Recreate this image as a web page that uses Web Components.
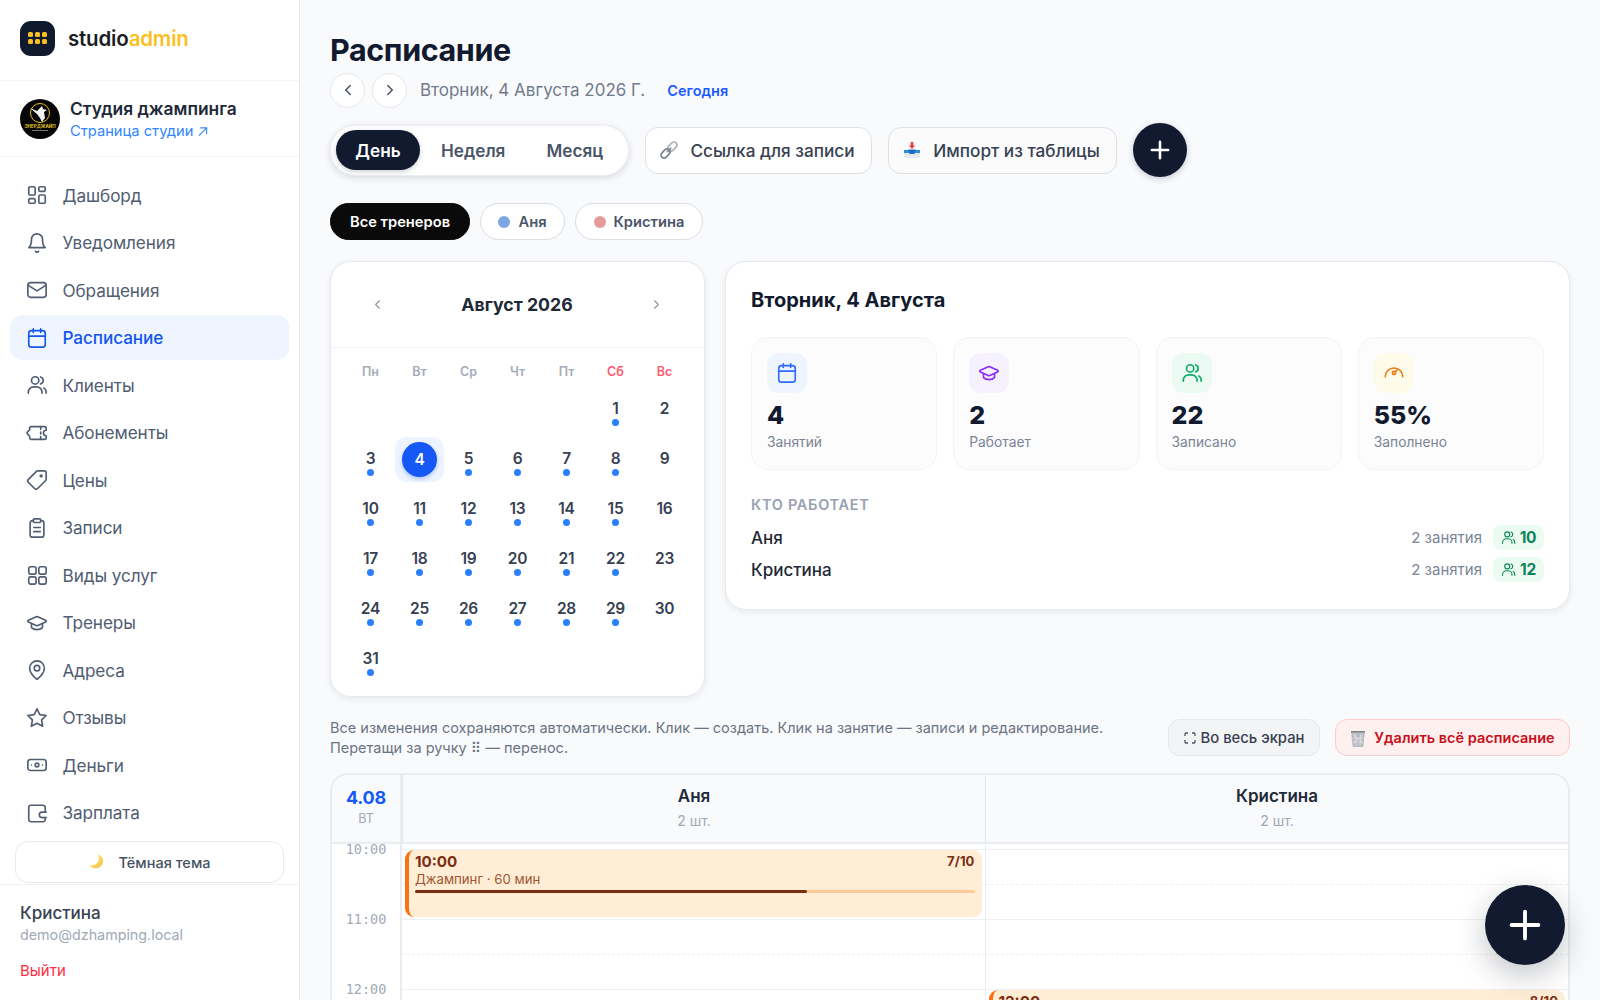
<!DOCTYPE html>
<html lang="ru"><head><meta charset="utf-8"><title>Расписание</title>
<style>
html,body{margin:0;height:100%;overflow:hidden;background:#f9fafc;font-family:Inter,"DejaVu Sans",sans-serif;color:#111827}
</style></head>
<body>
<app-shell></app-shell>
<script>
const FONT='Inter,"DejaVu Sans",sans-serif';
const I={
dash:'<rect x="3" y="3" width="7" height="9" rx="1.5"/><rect x="14" y="3" width="7" height="5" rx="1.5"/><rect x="14" y="12" width="7" height="9" rx="1.5"/><rect x="3" y="16" width="7" height="5" rx="1.5"/>',
bell:'<path d="M6 8a6 6 0 0 1 12 0c0 7 3 9 3 9H3s3-2 3-9"/><path d="M10.3 21a1.94 1.94 0 0 0 3.4 0"/>',
mail:'<rect x="2" y="4" width="20" height="16" rx="3"/><path d="m2.5 7 9.5 6 9.5-6"/>',
cal:'<path d="M8 2v4M16 2v4"/><rect x="3" y="4" width="18" height="18" rx="3"/><path d="M3 10h18"/>',
users:'<circle cx="10" cy="7" r="4"/><path d="M2.5 21v-1a6 6 0 0 1 6-6h3a6 6 0 0 1 6 6v1"/><path d="M16 3.2a4 4 0 0 1 0 7.6"/><path d="M22 21v-1.5a5 5 0 0 0-2.5-4.2"/>',
ticket:'<path d="M5.500 5H20.500A1.500 1.500 0 0 1 22 6.500V9a3 3 0 0 0 0 6v2.500a1.500 1.500 0 0 1-1.500 1.500H5.500A1.500 1.500 0 0 1 4 17.500V15.500L1.800 13.200a1.700 1.700 0 0 1 0-2.400L4 8.500V6.500A1.500 1.500 0 0 1 5.500 5Z"/><path d="M16 5v3M16 11v2M16 16v3"/>',
tag:'<g transform="matrix(-1 0 0 1 24 0)"><path d="M12.586 2.586A2 2 0 0 0 11.172 2H4a2 2 0 0 0-2 2v7.172a2 2 0 0 0 .586 1.414l8.704 8.704a2.426 2.426 0 0 0 3.420 0l6.580-6.580a2.426 2.426 0 0 0 0-3.420z"/><circle cx="7.500" cy="7.500" r="1"/></g>',
clip:'<rect x="8" y="2" width="8" height="4" rx="1"/><path d="M16 4h1a2.500 2.500 0 0 1 2.500 2.500V19.500A2.500 2.500 0 0 1 17 22H7a2.500 2.500 0 0 1-2.500-2.500V6.500A2.500 2.500 0 0 1 7 4h1"/><path d="M8.500 11.500h7M8.500 16h7"/>',
grid:'<rect x="3" y="3" width="8" height="8" rx="2"/><rect x="14" y="3" width="8" height="8" rx="2"/><rect x="3" y="14" width="8" height="8" rx="2"/><rect x="14" y="14" width="8" height="8" rx="2"/>',
cap:'<path d="M21.420 10.922a1 1 0 0 0-.019-1.838L12.830 5.180a2 2 0 0 0-1.660 0L2.600 9.080a1 1 0 0 0 0 1.832l8.570 3.908a2 2 0 0 0 1.660 0z"/><path d="M6 12.500V17c3 3 9 3 12 0v-4.500"/>',
pin:'<path d="M20 10c0 4.993-5.539 10.193-7.399 11.799a1 1 0 0 1-1.202 0C9.539 20.193 4 14.993 4 10a8 8 0 0 1 16 0"/><circle cx="12" cy="10" r="3"/>',
star:'<polygon points="12 2 15.090 8.260 22 9.270 17 14.140 18.180 21.020 12 17.770 5.820 21.020 7 14.140 2 9.270 8.910 8.260"/>',
money:'<rect x="2" y="6" width="20" height="12" rx="3"/><circle cx="12" cy="12" r="2"/><path d="M6 12h.01M18 12h.01"/>',
wallet:'<path d="M21 10V6a2.500 2.500 0 0 0-2.500-2.500H5.500A2.500 2.500 0 0 0 3 6v13a2.500 2.500 0 0 0 2.500 2.500h13a2.500 2.500 0 0 0 2.500-2.500v-2"/><path d="M22 11h-4.500a3 3 0 0 0 0 6H22"/>',
gauge:'<path d="M2.500 16a9.500 9.500 0 0 1 19 0"/><circle cx="12" cy="12" r="1.800"/><path d="m13.500 10.500 1.800-1.800"/>',
left:'<path d="m15 18-6-6 6-6"/>',right:'<path d="m9 18 6-6-6-6"/>',plus:'<path d="M5 12h14M12 5v14"/>'
};
const svg=(n,s=20,w=2,c='currentColor')=>`<svg width="${s}" height="${s}" viewBox="0 0 24 24" fill="none" stroke="${c}" stroke-width="${w}" stroke-linecap="round" stroke-linejoin="round" aria-hidden="true">${I[n]}</svg>`;
const EMOJI={
link:`<svg width="20" height="20" viewBox="0 0 20 20" fill="none"><g stroke-linecap="round"><path d="M8.500 11.500l3-3" stroke="#8b939c" stroke-width="2"/><rect x="10.500" y="1.500" width="6" height="10" rx="3" transform="rotate(45 13.500 6.500)" stroke="#aeb5bc" stroke-width="1.800"/><rect x="3.500" y="8.500" width="6" height="10" rx="3" transform="rotate(45 6.500 13.500)" stroke="#7d858e" stroke-width="1.800"/></g></svg>`,
inbox:`<svg width="20" height="20" viewBox="0 0 20 20"><path d="M2 11h16v6a1 1 0 0 1-1 1H3a1 1 0 0 1-1-1z" fill="#e6e8ea"/><path d="M2 10h4.500l1 3h5l1-3H18v3H2z" fill="#2f8ce0"/><path d="M6 9.500h8L12.500 14h-5z" fill="#1f6fc0"/><path d="M8.700 2h2.600v3.500H13l-3 3.500-3-3.500h1.700z" fill="#ee3a3a"/></svg>`,
moon:`<svg width="18" height="18" viewBox="0 0 18 18"><defs><linearGradient id="m" x1="0" y1="0" x2="1" y2="1"><stop offset="0" stop-color="#fff0a8"/><stop offset="1" stop-color="#f5bf30"/></linearGradient></defs><path d="M10 1.500c3.800 1.200 5.500 4.300 5 7.500-.6 3.800-4 6.500-7.700 6.300-2.700-.2-4.800-1.500-5.800-3.300 3.700 1 7-.4 8.500-3.300 1-2.200 1-4.800 0-7.200z" fill="url(#m)"/></svg>`,
trash:`<svg width="16" height="18" viewBox="0 0 16 18"><path d="M1 2h14l-1.500 15a1 1 0 0 1-1 1h-9a1 1 0 0 1-1-1z" fill="#b9bdc1"/><path d="M1 2h14v1.500H1z" fill="#7d8286"/><path d="M3.500 6l9 8M12.500 6l-9 8M5 4.500l1 12M11 4.500l-1 12M2.500 9h11M3 13h10" stroke="#e4e6e8" stroke-width=".7"/></svg>`
};
const base=`:host{font-family:${FONT};box-sizing:border-box}*{box-sizing:border-box}`;
function def(name,css,render){customElements.define(name,class extends HTMLElement{connectedCallback(){if(this.shadowRoot)return;const r=this.attachShadow({mode:'open'});r.innerHTML=`<style>${base}${css}</style>`+render(this);}});}

def('nav-link',`:host{display:flex;align-items:center;height:45px;padding:0 0 0 16px;gap:14.500px;border-radius:12px;font-size:17.200px;color:#515d72;letter-spacing:-.1px}
:host([active]){background:#eef5ff;color:#1457f0;font-weight:500}svg{flex:none}`,
e=>svg(e.getAttribute('icon'),22,1.800)+`<span><slot></slot></span>`);

def('app-sidebar',`:host{display:flex;flex-direction:column;flex:none;width:300px;height:1000px;background:#fff;border-right:1px solid #e9ebef}
.brand{display:flex;align-items:center;gap:13px;height:81px;padding:0 20px 4px;border-bottom:1px solid #f3f4f6}
.logo{width:35px;height:35px;border-radius:11px;background:#101a2e;display:grid;grid-template-columns:repeat(3,5px);gap:2px;place-content:center}
.logo i{width:5px;height:5px;border-radius:1.500px;background:#fbbf24}
.word{font-size:20.500px;font-weight:600;letter-spacing:-.2px;color:#1a1d23}.word b{font-weight:600;color:#fbbf24}
.studio{display:flex;align-items:center;gap:10px;height:76px;padding:0 20px;border-bottom:1px solid #f3f4f6}
.studio svg{flex:none}
.t{padding-top:3px}.n{font-size:17.400px;font-weight:600;color:#1f2937;line-height:22px}.l{font-size:14.700px;color:#2f86ff;line-height:22px;display:flex;align-items:center;gap:4px}
nav{display:flex;flex-direction:column;gap:2.500px;padding:15.500px 10px 0}
.theme{display:flex;align-items:center;justify-content:center;gap:12px;height:42px;margin:6px 15px 0;border:1px solid #e8eaef;border-radius:13px;font-size:14.500px;font-weight:500;color:#475264}
.foot{border-top:1px solid #eef0f3;margin-top:1px;padding:17px 20px 0}
.fn{font-size:17px;font-weight:500;color:#374151;line-height:22px}.fe{font-size:14.300px;color:#a1a9b6;line-height:20px;margin-top:1px}.out{font-size:15px;color:#ff2d3f;margin-top:16px;line-height:20px}`,
()=>`<div class="brand"><div class="logo">${'<i></i>'.repeat(6)}</div><div class="word">studio<b>admin</b></div></div>
<div class="studio"><svg width="40" height="40" viewBox="0 0 40 40"><circle cx="20" cy="20" r="20" fill="#050505"/><circle cx="20" cy="14" r="9.500" fill="none" stroke="#e5c320" stroke-width="1"/><path d="M10 9l7 3 5-5 1 3 4 1-3 2 1 6-3 4-2-4-3-4z" fill="#f4f4f4"/><text x="20" y="28.500" text-anchor="middle" font-size="4.500" font-weight="700" fill="#e5c320" font-family="Inter">ЭНЕРДЖАЙП</text><rect x="12" y="31" width="16" height="1" fill="#777"/></svg>
<div class="t"><div class="n">Студия джампинга</div><div class="l">Страница студии <svg width="11" height="11" viewBox="0 0 12 12" fill="none" stroke="currentColor" stroke-width="1.200"><path d="M2 10.500 10 2.500M3.500 2h7v7"/></svg></div></div></div>
<nav>
<nav-link icon="dash">Дашборд</nav-link><nav-link icon="bell">Уведомления</nav-link><nav-link icon="mail">Обращения</nav-link><nav-link icon="cal" active>Расписание</nav-link><nav-link icon="users">Клиенты</nav-link><nav-link icon="ticket">Абонементы</nav-link><nav-link icon="tag">Цены</nav-link><nav-link icon="clip">Записи</nav-link><nav-link icon="grid">Виды услуг</nav-link><nav-link icon="cap">Тренеры</nav-link><nav-link icon="pin">Адреса</nav-link><nav-link icon="star">Отзывы</nav-link><nav-link icon="money">Деньги</nav-link><nav-link icon="wallet">Зарплата</nav-link>
</nav>
<div class="theme">${EMOJI.moon}<span>Тёмная тема</span></div>
<div class="foot"><div class="fn">Кристина</div><div class="fe">demo@dzhamping.local</div><div class="out">Выйти</div></div>`);

def('page-head',`:host{display:block}
h1{margin:0;font-size:30.500px;font-weight:700;line-height:40px;color:#111a2e;letter-spacing:-.4px}
.row{display:flex;align-items:center;margin-top:3px;height:34px}
.c{width:35px;height:35px;border:1px solid #e6e8ed;border-radius:50%;background:#fff;display:grid;place-items:center;color:#475264;margin-right:7px;flex:none}
.d{font-size:17px;color:#717b8d;margin:0 22px 0 6px}.t{font-size:14.500px;font-weight:600;color:#1a5cff}`,
()=>`<h1>Расписание</h1><div class="row"><div class="c">${svg('left',18,2)}</div><div class="c">${svg('right',18,2)}</div><div class="d">Вторник, 4 Августа 2026 Г.</div><div class="t">Сегодня</div></div>`);

def('view-tabs',`:host{display:flex;align-items:center;height:51px;width:299px;padding:0 5px;background:#fff;border:1px solid #eceef2;border-radius:26px;box-shadow:0 2px 7px rgba(16,24,40,.14);font-size:17.200px;font-weight:600;color:#4b5568}
span{display:flex;align-items:center;justify-content:center;height:40px}
.a{width:84px;background:#111a2e;color:#fff;border-radius:20px;box-shadow:0 2px 5px rgba(16,24,40,.2);margin-right:21px}.b{margin-right:41px}`,
()=>`<span class="a">День</span><span class="b">Неделя</span><span>Месяц</span>`);

def('tool-button',`:host{display:flex;align-items:center;justify-content:center;height:47px;gap:11px;padding-right:3px;background:#fff;border:1.500px solid #dde0e7;border-radius:13px;font-size:17.200px;font-weight:500;color:#374151}svg{flex:none}`,
e=>EMOJI[e.getAttribute('emoji')]+`<span><slot></slot></span>`);

def('trainer-chip',`:host{display:flex;align-items:center;justify-content:center;gap:8px;height:37px;border:1px solid #d9dde4;border-radius:19px;background:#fff;font-size:14.700px;font-weight:600;color:#4b5568}
:host([on]){background:#0a0a0a;border-color:#0a0a0a;color:#fff}i{width:12px;height:12px;border-radius:50%;background:var(--c)}`,
e=>(e.hasAttribute('dot')?`<i style="--c:${e.getAttribute('dot')}"></i>`:'')+`<span><slot></slot></span>`);

def('mini-calendar',`:host{display:block;background:#fff;border:1px solid #e7e9ee;border-radius:21px;box-shadow:0 2px 6px rgba(16,24,40,.08);height:436px}
.h{display:flex;align-items:center;justify-content:space-between;height:86px;padding:0 40px 0 39px;border-bottom:1.500px solid #f3f4f6;font-size:17.700px;font-weight:700;color:#1f2937}
.g{display:grid;grid-template-columns:repeat(7,49px);padding:0 16px;justify-content:center}
.w{height:35px;padding-top:10px;text-align:center;font-size:12.500px;font-weight:600;color:#a4abb8;line-height:28px}.w.r{color:#ff5a72}
.d{position:relative;height:50px;display:flex;align-items:center;justify-content:center;font-size:15.500px;font-weight:600;color:#374151;letter-spacing:-.2px}
.d.dot::after{content:"";position:absolute;left:50%;bottom:7px;width:7.500px;height:7.500px;margin-left:-3.750px;border-radius:50%;background:#2a7fff}
.t{background:#eef4ff;border-radius:12px;height:45px;margin-top:4px;margin-bottom:1px}
.t b{width:35px;height:35px;border-radius:50%;background:#1558f5;color:#fff;display:grid;place-items:center;font-weight:600;box-shadow:0 2px 4px rgba(21,88,245,.3)}
.ar{color:#8a93a3;display:flex}`,
()=>{const wd=['Пн','Вт','Ср','Чт','Пт','Сб','Вс'].map((x,i)=>`<div class="w${i>4?' r':''}">${x}</div>`).join('');
let c='<div></div>'.repeat(5);for(let i=1;i<=31;i++){const sun=[2,9,16,23,30].includes(i);
c+=i==4?`<div class="d t"><b>4</b></div>`:`<div class="d${sun?'':' dot'}">${i}</div>`;}
return `<div class="h"><span class="ar">${svg('left',15,1.800)}</span><span>Август 2026</span><span class="ar">${svg('right',15,1.800)}</span></div><div class="g">${wd}${c}</div>`;});

def('stat-card',`:host{display:block;height:133px;padding:15px 15px;background:#fcfcfd;border:1px solid #f3f4f6;border-radius:17px}
.i{width:40px;height:40px;border-radius:12px;display:grid;place-items:center;background:var(--bg);color:var(--fg)}
.v{font-size:25px;font-weight:800;color:#111a2e;line-height:32px;margin-top:6px}.l{font-size:13.800px;color:#7a8496;line-height:20px;margin-top:1px}`,
e=>`<div class="i" style="--bg:${e.getAttribute('bg')};--fg:${e.getAttribute('fg')}">${svg(e.getAttribute('icon'),22,1.800)}</div><div class="v">${e.getAttribute('value')}</div><div class="l"><slot></slot></div>`);

def('worker-row',`:host{display:flex;align-items:center;height:25px;font-size:17px;font-weight:500;color:#1f2937}
.s{margin-left:auto;font-size:15px;font-weight:400;color:#7a8496}
.p{display:flex;align-items:center;gap:4px;margin-left:11px;width:51px;height:25px;justify-content:center;background:#ebfbf2;border-radius:8px;color:#0b8458;font-size:15.500px;font-weight:700;letter-spacing:-.3px}`,
e=>`<span><slot></slot></span><span class="s">2 занятия</span><span class="p">${svg('users',15,1.800)}${e.getAttribute('n')}</span>`);

def('day-summary',`:host{display:block;height:349px;padding:0 25px;background:#fff;border:1px solid #e7e9ee;border-radius:21px;box-shadow:0 2px 6px rgba(16,24,40,.08)}
h2{margin:0;height:75px;padding-top:25px;font-size:20px;line-height:26px;font-weight:700;color:#111a2e}
.s{display:grid;grid-template-columns:repeat(4,1fr);gap:16px}
.k{margin-top:25px;font-size:14.500px;line-height:20px;font-weight:600;color:#98a1b0;letter-spacing:.7px}
.r{display:flex;flex-direction:column;gap:7px;margin-top:10px}`,
()=>`<h2>Вторник, 4 Августа</h2><div class="s">
<stat-card icon="cal" bg="#eef5ff" fg="#2f6bff" value="4">Занятий</stat-card>
<stat-card icon="cap" bg="#f5f1ff" fg="#8b2cf5" value="2">Работает</stat-card>
<stat-card icon="users" bg="#ebfbf3" fg="#0ea968" value="22">Записано</stat-card>
<stat-card icon="gauge" bg="#fffbeb" fg="#ea7a0c" value="55%">Заполнено</stat-card></div>
<div class="k">КТО РАБОТАЕТ</div><div class="r"><worker-row n="10">Аня</worker-row><worker-row n="12">Кристина</worker-row></div>`);

def('hint-bar',`:host{display:flex;align-items:center;justify-content:space-between;height:37px}
.t{font-size:14.500px;line-height:20px;color:#6b7483;width:800px}
.a{display:flex;gap:15px}.b{display:flex;align-items:center;justify-content:center;gap:5px;height:37px;border-radius:12px;font-size:14.800px;font-weight:500}
.f{width:152px;background:#f3f4f6;border:1px solid #e5e7eb;color:#374151}.x{width:235px;background:#fff0f0;border:1px solid #fecaca;color:#c8101a;font-weight:600;font-size:14.500px;gap:8px}`,
()=>`<div class="t">Все изменения сохраняются автоматически. Клик — создать. Клик на занятие — записи и редактирование. Перетащи за ручку ⠿ — перенос.</div>
<div class="a"><div class="b f"><svg width="12" height="12" viewBox="0 0 12 12" fill="none" stroke="#4b5563" stroke-width="1.300"><path d="M1 4V2a1 1 0 0 1 1-1h2M8 1h2a1 1 0 0 1 1 1v2M11 8v2a1 1 0 0 1-1 1H8M4 11H2a1 1 0 0 1-1-1V8"/></svg>Во весь экран</div><div class="b x">${EMOJI.trash}Удалить всё расписание</div></div>`);

def('class-event',`:host{position:absolute;left:3px;right:3px;top:var(--top);height:67px;padding:1px 7px 0 6px;background:#ffedd5;border-left:4px solid #f97316;border-radius:9px;color:#7c2d12;display:block}
.a{display:flex;justify-content:space-between;align-items:center;height:20px;font-size:15.200px;font-weight:700}.c{font-size:13px;letter-spacing:.1px}
.m{font-size:13.200px;color:#a05530;line-height:18px;margin-top:-1px}.b{height:2.500px;margin-top:2px;background:#fdc99a;border-radius:2px}.b i{display:block;height:100%;width:var(--w);background:#7c2d12;border-radius:2px}`,
e=>`<div class="a"><span>${e.getAttribute('time')}</span><span class="c">${e.getAttribute('seats')}</span></div><div class="m">Джампинг · 60 мин</div><div class="b"><i style="--w:${e.getAttribute('fill')}"></i></div>`);

def('schedule-column',`:host{display:block;position:relative;flex:1;min-width:0;padding-top:5px}
:host(.second){border-left:1px solid #eceef2}
.r{height:70px;border-top:1px solid #f0f1f4;position:relative}.r::after{content:"";position:absolute;left:0;right:0;top:34px;border-top:1px dashed #eef0f3}`,
()=>`<div class="r"></div><div class="r"></div><div class="r"></div><slot></slot>`);

def('schedule-grid',`:host{display:block;height:330px;background:#fff;border:2px solid #e9ecf1;border-bottom:0;border-radius:18px 18px 0 0;overflow:hidden}
.h{display:flex;height:69px;background:#f9fafc;border-bottom:2px solid #e9ecf1}
.tc{flex:none;width:70px;text-align:center;border-right:2px solid #e9ecf1;padding-top:11px}
.dt{font-size:18px;line-height:24px;font-weight:700;color:#1558f5;letter-spacing:-.2px}.wd{font-size:12.500px;line-height:16px;color:#a0a8b5;margin-top:1px}
.cn{flex:1;text-align:center;padding-top:9px;border-left:1px solid #e4e6eb}.cn:first-of-type{border-left:0}
.cn b{display:block;font-size:17px;line-height:24px;font-weight:600;color:#1f2937}.cn span{display:block;font-size:14px;line-height:20px;color:#a0a8b5;margin-top:3px}
.b{display:flex;background:#fff}
.tm{flex:none;width:70px;border-right:2px solid #e9ecf1;padding-top:5px;overflow:hidden;height:300px}
.tm div{height:70px;text-align:center;font:13.500px/16px "DejaVu Sans Mono",monospace;color:#a3abb8;margin-top:0;transform:translateY(-8px)}`,
()=>`<div class="h"><div class="tc"><div class="dt">4.08</div><div class="wd">ВТ</div></div><div class="cn"><b>Аня</b><span>2 шт.</span></div><div class="cn"><b>Кристина</b><span>2 шт.</span></div></div>
<div class="b"><div class="tm"><div>10:00</div><div>11:00</div><div>12:00</div></div>
<schedule-column><class-event style="--top:6px" time="10:00" seats="7/10" fill="70%"></class-event></schedule-column>
<schedule-column class="second"><class-event style="--top:146px" time="12:00" seats="8/10" fill="80%"></class-event></schedule-column></div>`);

def('round-add',`:host{display:grid;place-items:center;flex:none;border-radius:50%;background:#111a2e;color:#fff;width:var(--d);height:var(--d)}`,
e=>svg('plus',e.getAttribute('s'),e.getAttribute('w')));

def('app-shell',`:host{display:flex;width:1600px;height:1000px;overflow:hidden;background:#f9fafc}
main{flex:1;min-width:0;padding:30px 30px 0}
.tb{display:flex;align-items:center;margin-top:16px;height:54px}
.tb tool-button{margin-left:16px}.tb round-add{margin-left:16px;--d:54px;box-shadow:0 2px 6px rgba(16,24,40,.2)}
.ch{display:flex;gap:10px;margin-top:26px}
.cards{display:grid;grid-template-columns:375px 845px;gap:20px;align-items:start;margin-top:21px}
hint-bar{margin-top:22px}schedule-grid{margin-top:17px}
.fab{position:fixed;left:1485px;top:885px;--d:80px;box-shadow:0 10px 30px rgba(16,24,40,.25)}`,
()=>`<app-sidebar></app-sidebar><main><page-head></page-head>
<div class="tb"><view-tabs></view-tabs><tool-button emoji="link" style="width:227px">Ссылка для записи</tool-button><tool-button emoji="inbox" style="width:229px;background:#fbfbfc">Импорт из таблицы</tool-button><round-add s="28" w="2.200"></round-add></div>
<div class="ch"><trainer-chip on style="width:140px">Все тренеров</trainer-chip><trainer-chip dot="#7da7e0" style="width:85px">Аня</trainer-chip><trainer-chip dot="#e79a9a" style="width:128px">Кристина</trainer-chip></div>
<div class="cards"><mini-calendar></mini-calendar><day-summary></day-summary></div>
<hint-bar></hint-bar><schedule-grid></schedule-grid></main>
<round-add class="fab" s="46" w="2"></round-add>`);
</script>
</body></html>
